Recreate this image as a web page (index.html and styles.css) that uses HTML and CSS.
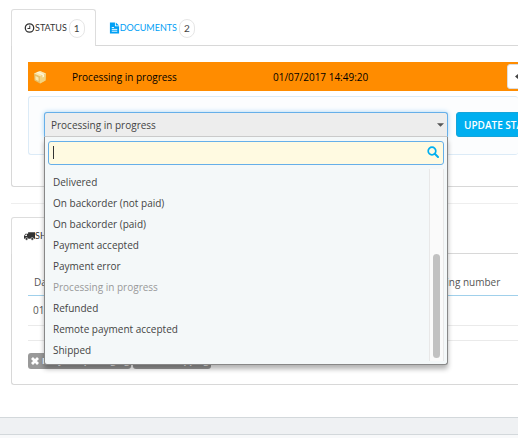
FILE: index.html
```html
<!DOCTYPE html>
<html lang="en">
<head>
<meta charset="utf-8">
<title>Order status</title>
<link rel="stylesheet" href="styles.css">
</head>
<body>
<main class="content">
  <section class="card">
    <nav class="tabs">
      <a class="tab tab-active" href="#status">
        <svg class="icon" viewBox="0 0 12 12" aria-hidden="true"><circle cx="6" cy="6" r="4.6" fill="none" stroke="currentColor" stroke-width="1.4"/><path d="M6.3 3.3V6.5H3.8" fill="none" stroke="currentColor" stroke-width="1.1"/></svg>
        <span>STATUS</span><span class="badge">1</span>
      </a>
      <a class="tab tab-link" href="#documents">
        <svg class="icon" viewBox="0 0 12 12" aria-hidden="true"><path d="M1 0H6.5V4.2H11V12H1Z M7.4 0L11 3.4H7.4Z" fill="currentColor"/><path d="M3 5.5H5.5M3 7.5H9M3 9.5H9" stroke="#fff" stroke-width="1"/></svg>
        <span>DOCUMENTS</span><span class="badge">2</span>
      </a>
    </nav>
    <div class="panel" id="status">
      <div class="history">
        <svg class="box-icon" viewBox="0 0 14 14" aria-hidden="true"><path d="M1 3.5L7 1L13 3.5L12.5 10.5L7 13.5L1.5 10.5Z" fill="#e8c069"/><path d="M1 3.5L7 1L13 3.5L7 6.2Z" fill="#fbe7ae"/><path d="M7 6.2L13 3.5L12.5 10.5L7 13.5Z" fill="#f3d37f"/><path d="M3.5 2.5L9.5 5V7.5L11 6.8V4.4L5 1.8Z" fill="#fff6d8"/><path d="M2.5 6L5.5 7.5V11L2.5 9.5Z" fill="#fae9b4"/></svg>
        <span class="history-name">Processing in progress</span>
        <time class="history-date">01/07/2017 14:49:20</time>
        <button class="resend" type="button" aria-label="Resend email"><svg class="resend-icon" viewBox="0 0 12 12" aria-hidden="true"><path d="M0 5.5L5 1.5V4H12V7H5V9.5Z" fill="currentColor"/></svg></button>
      </div>
      <form class="well">
        <div class="picker">
          <select class="picker-select" aria-label="Order status">
            <option>Processing in progress</option>
          </select>
          <svg class="caret" viewBox="0 0 8 4" aria-hidden="true"><path d="M0 0H8L4 4Z" fill="#555"/></svg>
          <div class="menu">
            <div class="search">
              <input class="search-input" type="text" aria-label="Search status">
              <span class="cursor"></span>
              <svg class="search-icon" viewBox="0 0 12 12" aria-hidden="true"><circle cx="5" cy="5" r="3.8" fill="none" stroke="currentColor" stroke-width="1.7"/><path d="M7.8 7.8L11 11" stroke="currentColor" stroke-width="2" stroke-linecap="round"/></svg>
            </div>
            <div class="results">
              <ul class="options" role="listbox" aria-label="Statuses">
                <li role="option">Delivered</li>
                <li role="option">On backorder (not paid)</li>
                <li role="option">On backorder (paid)</li>
                <li role="option">Payment accepted</li>
                <li role="option">Payment error</li>
                <li role="option" class="chosen" aria-selected="true">Processing in progress</li>
                <li role="option">Refunded</li>
                <li role="option">Remote payment accepted</li>
                <li role="option">Shipped</li>
              </ul>
              <div class="track"><div class="thumb"></div></div>
            </div>
          </div>
        </div>
        <button class="update" type="button">UPDATE STATUS</button>
      </form>
    </div>
  </section>

  <hr class="divider">

  <section class="card">
    <nav class="tabs">
      <a class="tab tab-active" href="#shipping">
        <svg class="icon" viewBox="0 0 12 12" aria-hidden="true"><path d="M4.5 2H12V9H4.5Z M0 9V6L1.6 3.5H4.6V9Z" fill="currentColor"/><path d="M1 6L2 4.4H3.2V6Z" fill="#fff"/><circle cx="2.8" cy="9.2" r="1.5" fill="currentColor" stroke="#fff" stroke-width=".6"/><circle cx="9" cy="9.2" r="1.5" fill="currentColor" stroke="#fff" stroke-width=".6"/></svg>
        <span>SHIPPING</span><span class="badge">1</span>
      </a>
    </nav>
    <div class="panel panel-shipping" id="shipping">
      <table class="shipments">
        <thead><tr><th class="col-date">Date</th><th>Tracking number</th></tr></thead>
        <tbody>
          <tr><td>01/07/2017</td><td></td></tr>
          <tr class="spacer"><td></td><td></td></tr>
        </tbody>
      </table>
      <div class="tags">
        <span class="tag"><svg class="cross" viewBox="0 0 10 10" aria-hidden="true"><path d="M2 2L8 8M8 2L2 8" stroke="#fff" stroke-width="2.8"/></svg>Recycled packaging</span>
        <span class="tag"><svg class="cross" viewBox="0 0 10 10" aria-hidden="true"><path d="M2 2L8 8M8 2L2 8" stroke="#fff" stroke-width="2.8"/></svg>Gift wrapping</span>
      </div>
    </div>
  </section>
</main>
<footer class="footer"></footer>
</body>
</html>
```
FILE: styles.css
```css
* { box-sizing: border-box; }

body {
  margin: 0;
  overflow: hidden;
  background: #f8f9fa;
  color: #555;
  font: 10px/16px "Open Sans", "Noto Sans", sans-serif;
}

.content {
  padding: 9px 0 32px 11px;
  background: #fff;
}

.tabs {
  display: flex;
  height: 37px;
  margin-bottom: -1px;
}

.tab {
  display: flex;
  align-items: center;
  padding: 0 10px 0 12px;
  border: 1px solid transparent;
  border-bottom: 0;
  color: #333;
  font: 9px/16px "Lato", "Open Sans", sans-serif;
  text-decoration: none;
  white-space: nowrap;
}

.tab-active {
  position: relative;
  background: #fff;
  border-color: #ddd;
  border-radius: 3px 3px 0 0;
}

.tab-link { color: #00a0f5; }

.icon {
  width: 11px;
  height: 12px;
}

.badge {
  margin-left: 2px;
  padding: 0 4px;
  border: 1px solid #e6e6e6;
  border-radius: 8px;
  color: #444;
  font-size: 10px;
  line-height: 17px;
}

.panel {
  padding: 16px 0 31px 16px;
  border: 1px solid #d8d8d8;
  border-right: 0;
  border-radius: 0 0 0 3px;
}

.history {
  display: flex;
  align-items: center;
  height: 29px;
  padding-left: 5px;
  overflow: hidden;
  background: #ff8c00;
  color: #000;
}

.box-icon {
  width: 14px;
  height: 14px;
  margin-right: 25px;
}

.history-name { width: 201px; }

.resend {
  display: flex;
  align-items: center;
  width: 40px;
  height: 25px;
  margin-left: auto;
  margin-right: -29px;
  padding: 0 7px;
  border: 1px solid #ddd;
  border-radius: 3px;
  background: #fff;
  color: #444;
}

.resend-icon { flex: none; width: 12px; height: 12px; }

.well {
  display: flex;
  gap: 8px;
  margin-top: 5px;
  padding: 15px 0 17px 15px;
  overflow-x: clip;
  border: 1px solid #dcebf7;
  border-right: 0;
  border-radius: 3px;
  background: #fcfdfe;
}

.picker {
  position: relative;
  flex: none;
  width: 78vw;
}

.picker-select {
  display: block;
  width: 100%;
  height: 25px;
  padding: 0 6px;
  border: 1px solid #66afe9;
  border-bottom-color: #ccc;
  border-radius: 3px 3px 0 0;
  appearance: none;
  background: #ededed;
  box-shadow: 0 0 5px #a9d5f5;
  color: #444;
  font: inherit;
}

.caret {
  position: absolute;
  top: 11px;
  right: 4px;
  width: 7px;
  height: 4px;
  pointer-events: none;
}

.menu {
  position: absolute;
  z-index: 2;
  top: 25px;
  left: 0;
  right: 0;
  padding: 4px 3px 3px;
  border: 1px solid #888;
  border-top: 0;
  border-radius: 0 0 3px 3px;
  background: #f4f8f9;
  box-shadow: 0 4px 5px rgba(0, 0, 0, .3);
}

.search { position: relative; }

.search-input {
  display: block;
  width: 100%;
  height: 24px;
  padding: 0 24px 0 5px;
  border: 1px solid #66afe9;
  border-radius: 3px;
  outline: 0;
  background: #fffae1;
  font: inherit;
}

.cursor {
  position: absolute;
  top: 5px;
  left: 5px;
  width: 1px;
  height: 13px;
  background: #333;
}

.search-icon {
  position: absolute;
  top: 5px;
  right: 5px;
  width: 12px;
  height: 12px;
  color: #00aff0;
}

.results {
  display: flex;
  margin-top: 4px;
}

.options {
  flex: 1;
  margin: 0;
  padding: 3px 5px 0;
  list-style: none;
  color: #444;
  line-height: 21px;
}

.chosen { color: #999; }

.track {
  display: flex;
  align-items: flex-end;
  width: 15px;
  padding: 3px;
  border: solid #e8e8e8;
  border-width: 0 1px;
  background: #fafafa;
}

.thumb {
  width: 8px;
  height: 56%;
  border-radius: 4px;
  background: #c1c1c1;
}

.update {
  flex: none;
  height: 25px;
  padding: 0 7px;
  border: 1px solid #16a5da;
  border-radius: 3px;
  background: #00aff0;
  color: #fff;
  font: 600 10px/16px "Open Sans", sans-serif;
}

.divider {
  margin: 16px 0 13px;
  border: 0;
  border-top: 1px solid #eee;
}

.panel-shipping { padding: 15px 0 15px 16px; }

.shipments {
  width: 100%;
  border-collapse: collapse;
}

.shipments th,
.shipments td {
  height: 30px;
  padding: 0 5px;
  border-bottom: 1px solid #eaeaea;
  font-weight: 400;
  text-align: left;
}

.shipments th {
  height: 26px;
  padding-left: 6px;
  border-bottom-color: #a0d0eb;
}

.shipments .spacer td { height: 15px; }

.shipments .col-date { width: 79%; }

.tags {
  display: flex;
  gap: 2px;
  margin-top: 12px;
}

.tag {
  display: flex;
  align-items: center;
  padding: 0 2px;
  border-radius: 3px;
  background: #999;
  color: #fff;
  font-size: 9px;
  font-weight: 700;
}

.cross {
  width: 10px;
  height: 10px;
  margin-right: 2px;
}

.footer {
  height: 18px;
  border: solid #d3d8db;
  border-width: 1px 0;
  background: #eff1f3;
}
```
